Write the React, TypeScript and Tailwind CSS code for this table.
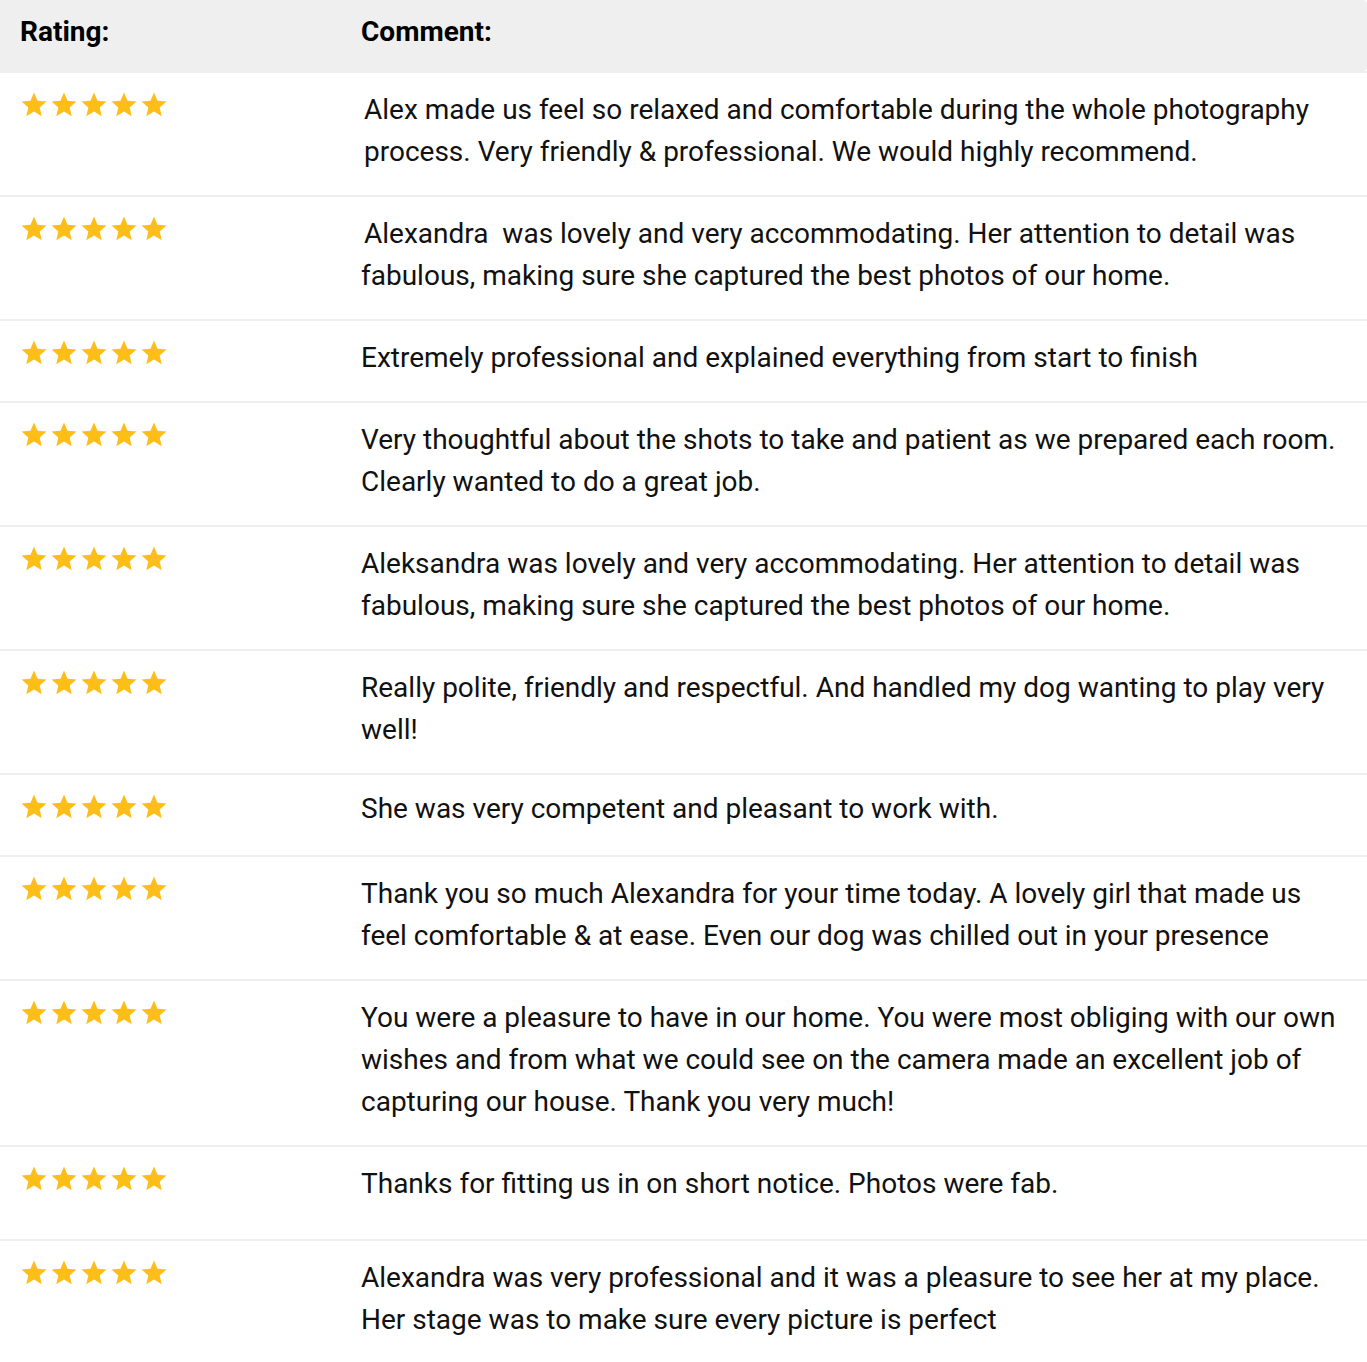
const reviews = [
  {
    text: "Alex made us feel so relaxed and comfortable during the whole photography process. Very friendly & professional. We would highly recommend.",
    shift: true,
  },
  {
    text: "Alexandra  was lovely and very accommodating. Her attention to detail was fabulous, making sure she captured the best photos of our home.",
    indent: true,
  },
  { text: "Extremely professional and explained everything from start to finish" },
  {
    text: "Very thoughtful about the shots to take and patient as we prepared each room. Clearly wanted to do a great job.",
  },
  {
    text: "Aleksandra was lovely and very accommodating. Her attention to detail was fabulous, making sure she captured the best photos of our home.",
  },
  {
    text: "Really polite, friendly and respectful. And handled my dog wanting to play very well!",
  },
  { text: "She was very competent and pleasant to work with.", raised: true },
  {
    text: "Thank you so much Alexandra for your time today. A lovely girl that made us feel comfortable & at ease. Even our dog was chilled out in your presence",
  },
  {
    text: "You were a pleasure to have in our home. You were most obliging with our own wishes and from what we could see on the camera made an excellent job of capturing our house. Thank you very much!",
  },
  { text: "Thanks for fitting us in on short notice. Photos were fab.", tall: true },
  {
    text: "Alexandra was very professional and it was a pleasure to see her at my place. Her stage was to make sure every picture is perfect",
  },
];

function Star() {
  return (
    <svg viewBox="0 0 24 24" className="w-[30px] h-[30px] shrink-0" fill="#fdbe17">
      <path d="M12 17.27L18.18 21l-1.64-7.03L22 9.24l-7.19-.61L12 2 9.19 8.63 2 9.24l5.46 4.73L5.82 21z" />
    </svg>
  );
}

export default function App() {
  return (
    <div className="w-[1367px] bg-white text-[#111] font-['Roboto',_'Liberation_Sans',_sans-serif]">
      {/* Header */}
      <div className="flex h-[71px] items-center pb-[7px] bg-[#efefef] rounded-r-[4px] text-[28px] font-bold text-black">
        <div className="w-[361px] pl-[20px]">Rating:</div>
        <div>Comment:</div>
      </div>

      {/* Rows */}
      {reviews.map((r, i) => (
        <div
          key={i}
          className={`flex border-t-2 border-[#eeeeee] pt-[16px] ${r.tall ? "pb-[34px]" : "pb-[22px]"}`}
        >
          <div className="w-[361px] shrink-0 pl-[19px] pt-[1px]">
            <div className="flex">
              <Star />
              <Star />
              <Star />
              <Star />
              <Star />
            </div>
          </div>
          <p
            className={`flex-1 pr-[20px] text-[28px] leading-[42px] whitespace-pre-wrap ${
              r.shift ? "pl-[3px]" : ""
            } ${r.indent ? "indent-[3px]" : ""} ${r.raised ? "-mt-[3px] mb-[3px]" : ""}`}
          >
            {r.text}
          </p>
        </div>
      ))}
    </div>
  );
}
